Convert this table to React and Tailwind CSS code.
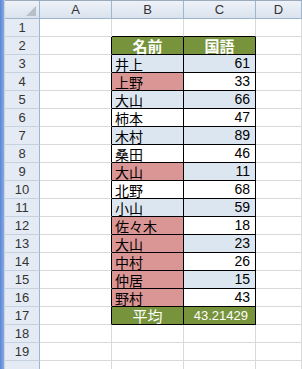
import React from 'react';

const rows = [
  { n: '井上', v: '61', b: 'blue', c: 'blue' },
  { n: '上野', v: '33', b: 'pink', c: 'white' },
  { n: '大山', v: '66', b: 'blue', c: 'blue' },
  { n: '柿本', v: '47', b: 'white', c: 'white' },
  { n: '木村', v: '89', b: 'blue', c: 'blue' },
  { n: '桑田', v: '46', b: 'white', c: 'white' },
  { n: '大山', v: '11', b: 'pink', c: 'blue' },
  { n: '北野', v: '68', b: 'white', c: 'white' },
  { n: '小山', v: '59', b: 'blue', c: 'blue' },
  { n: '佐々木', v: '18', b: 'pink', c: 'white' },
  { n: '大山', v: '23', b: 'pink', c: 'blue' },
  { n: '中村', v: '26', b: 'pink', c: 'white' },
  { n: '仲居', v: '15', b: 'pink', c: 'blue' },
  { n: '野村', v: '43', b: 'pink', c: 'white' },
];

const fills = {
  blue: 'bg-[#dce6f1]',
  pink: 'bg-[#da9694]',
  white: 'bg-white',
};

const jp = { fontFamily: '"Noto Sans CJK JP", sans-serif' };
const num = { fontFamily: '"Liberation Sans", Arial, sans-serif' };

const RowHead = ({ children }) => (
  <div
    className="h-[18px] flex items-center justify-center bg-[#e4ebf5] border-r border-b border-r-[#9eb6ce] border-b-[#c5d1df] text-[13px] text-[#333] leading-none"
    style={num}
  >
    {children}
  </div>
);

const Blank = ({ black }) => (
  <div className={`h-[18px] bg-white border-b border-r ${black ? 'border-r-black border-b-[#d9d9d9]' : 'border-[#d9d9d9]'}`} />
);

export default function App() {
  return (
    <div className="w-[302px] h-[369px] overflow-hidden bg-white flex">
      <div className="w-[4px] h-full bg-gradient-to-r from-[#5d85d2] to-[#86a8e6]" />
      <div className="w-[1px] h-full bg-[#c9d3df]" />
      <div className="flex-1 flex flex-col">
        <div className="h-[4px] bg-[#f1f3f6] border-b border-[#9aa9bb]" />
        <div className="grid grid-cols-[35px_72px_72px_72px_1fr] auto-rows-[18px]">
          {/* column header row */}
          <div className="relative bg-gradient-to-b from-[#eef2f8] to-[#dae3ee] border-r border-b border-[#9eb6ce]">
            <svg className="absolute right-[3px] bottom-[2px]" width="10" height="10" viewBox="0 0 10 10">
              <polygon points="10,0 10,10 0,10" fill="#b7bfca" />
            </svg>
          </div>
          {['A', 'B', 'C', 'D'].map((l) => (
            <div
              key={l}
              className="flex items-center justify-center bg-gradient-to-b from-[#eef2f8] to-[#dae3ee] border-r border-b border-[#9eb6ce] text-[13px] text-[#333] leading-none"
              style={num}
            >
              {l}
            </div>
          ))}

          {/* row 1 */}
          <RowHead>1</RowHead>
          <Blank />
          <div className="bg-white border-r border-b border-r-[#d9d9d9] border-b-black" />
          <div className="bg-white border-r border-b border-r-[#d9d9d9] border-b-black" />
          <Blank />

          {/* row 2 header */}
          <RowHead>2</RowHead>
          <Blank black />
          <div className="flex items-center justify-center bg-[#77933c] border-r border-b border-black text-white text-[15px] font-bold leading-none" style={jp}>
            名前
          </div>
          <div className="flex items-center justify-center bg-[#77933c] border-r border-b border-black text-white text-[15px] font-bold leading-none" style={jp}>
            国語
          </div>
          <Blank />

          {rows.map((r, i) => (
            <React.Fragment key={i}>
              <RowHead>{i + 3}</RowHead>
              <Blank black />
              <div className={`flex items-end pl-[3px] pb-[1px] ${fills[r.b]} border-r border-b border-black text-[14px] text-black leading-none`} style={jp}>
                {r.n}
              </div>
              <div className={`flex items-end justify-end pr-[5px] pb-[2px] ${fills[r.c]} border-r border-b border-black text-[14px] text-black leading-none`} style={num}>
                {r.v}
              </div>
              <Blank />
            </React.Fragment>
          ))}

          {/* row 17 average */}
          <RowHead>17</RowHead>
          <Blank black />
          <div className="flex items-center justify-center bg-[#77933c] border-r border-b border-black text-white text-[15px] leading-none" style={jp}>
            平均
          </div>
          <div className="flex items-end justify-end pr-[7px] pb-[2px] bg-[#77933c] border-r border-b border-black text-white text-[13px] leading-none" style={num}>
            43.21429
          </div>
          <Blank />

          {[18, 19, 20].map((n) => (
            <React.Fragment key={n}>
              <RowHead>{n < 20 ? n : ''}</RowHead>
              <Blank />
              <Blank />
              <Blank />
              <Blank />
            </React.Fragment>
          ))}
        </div>
      </div>
    </div>
  );
}
